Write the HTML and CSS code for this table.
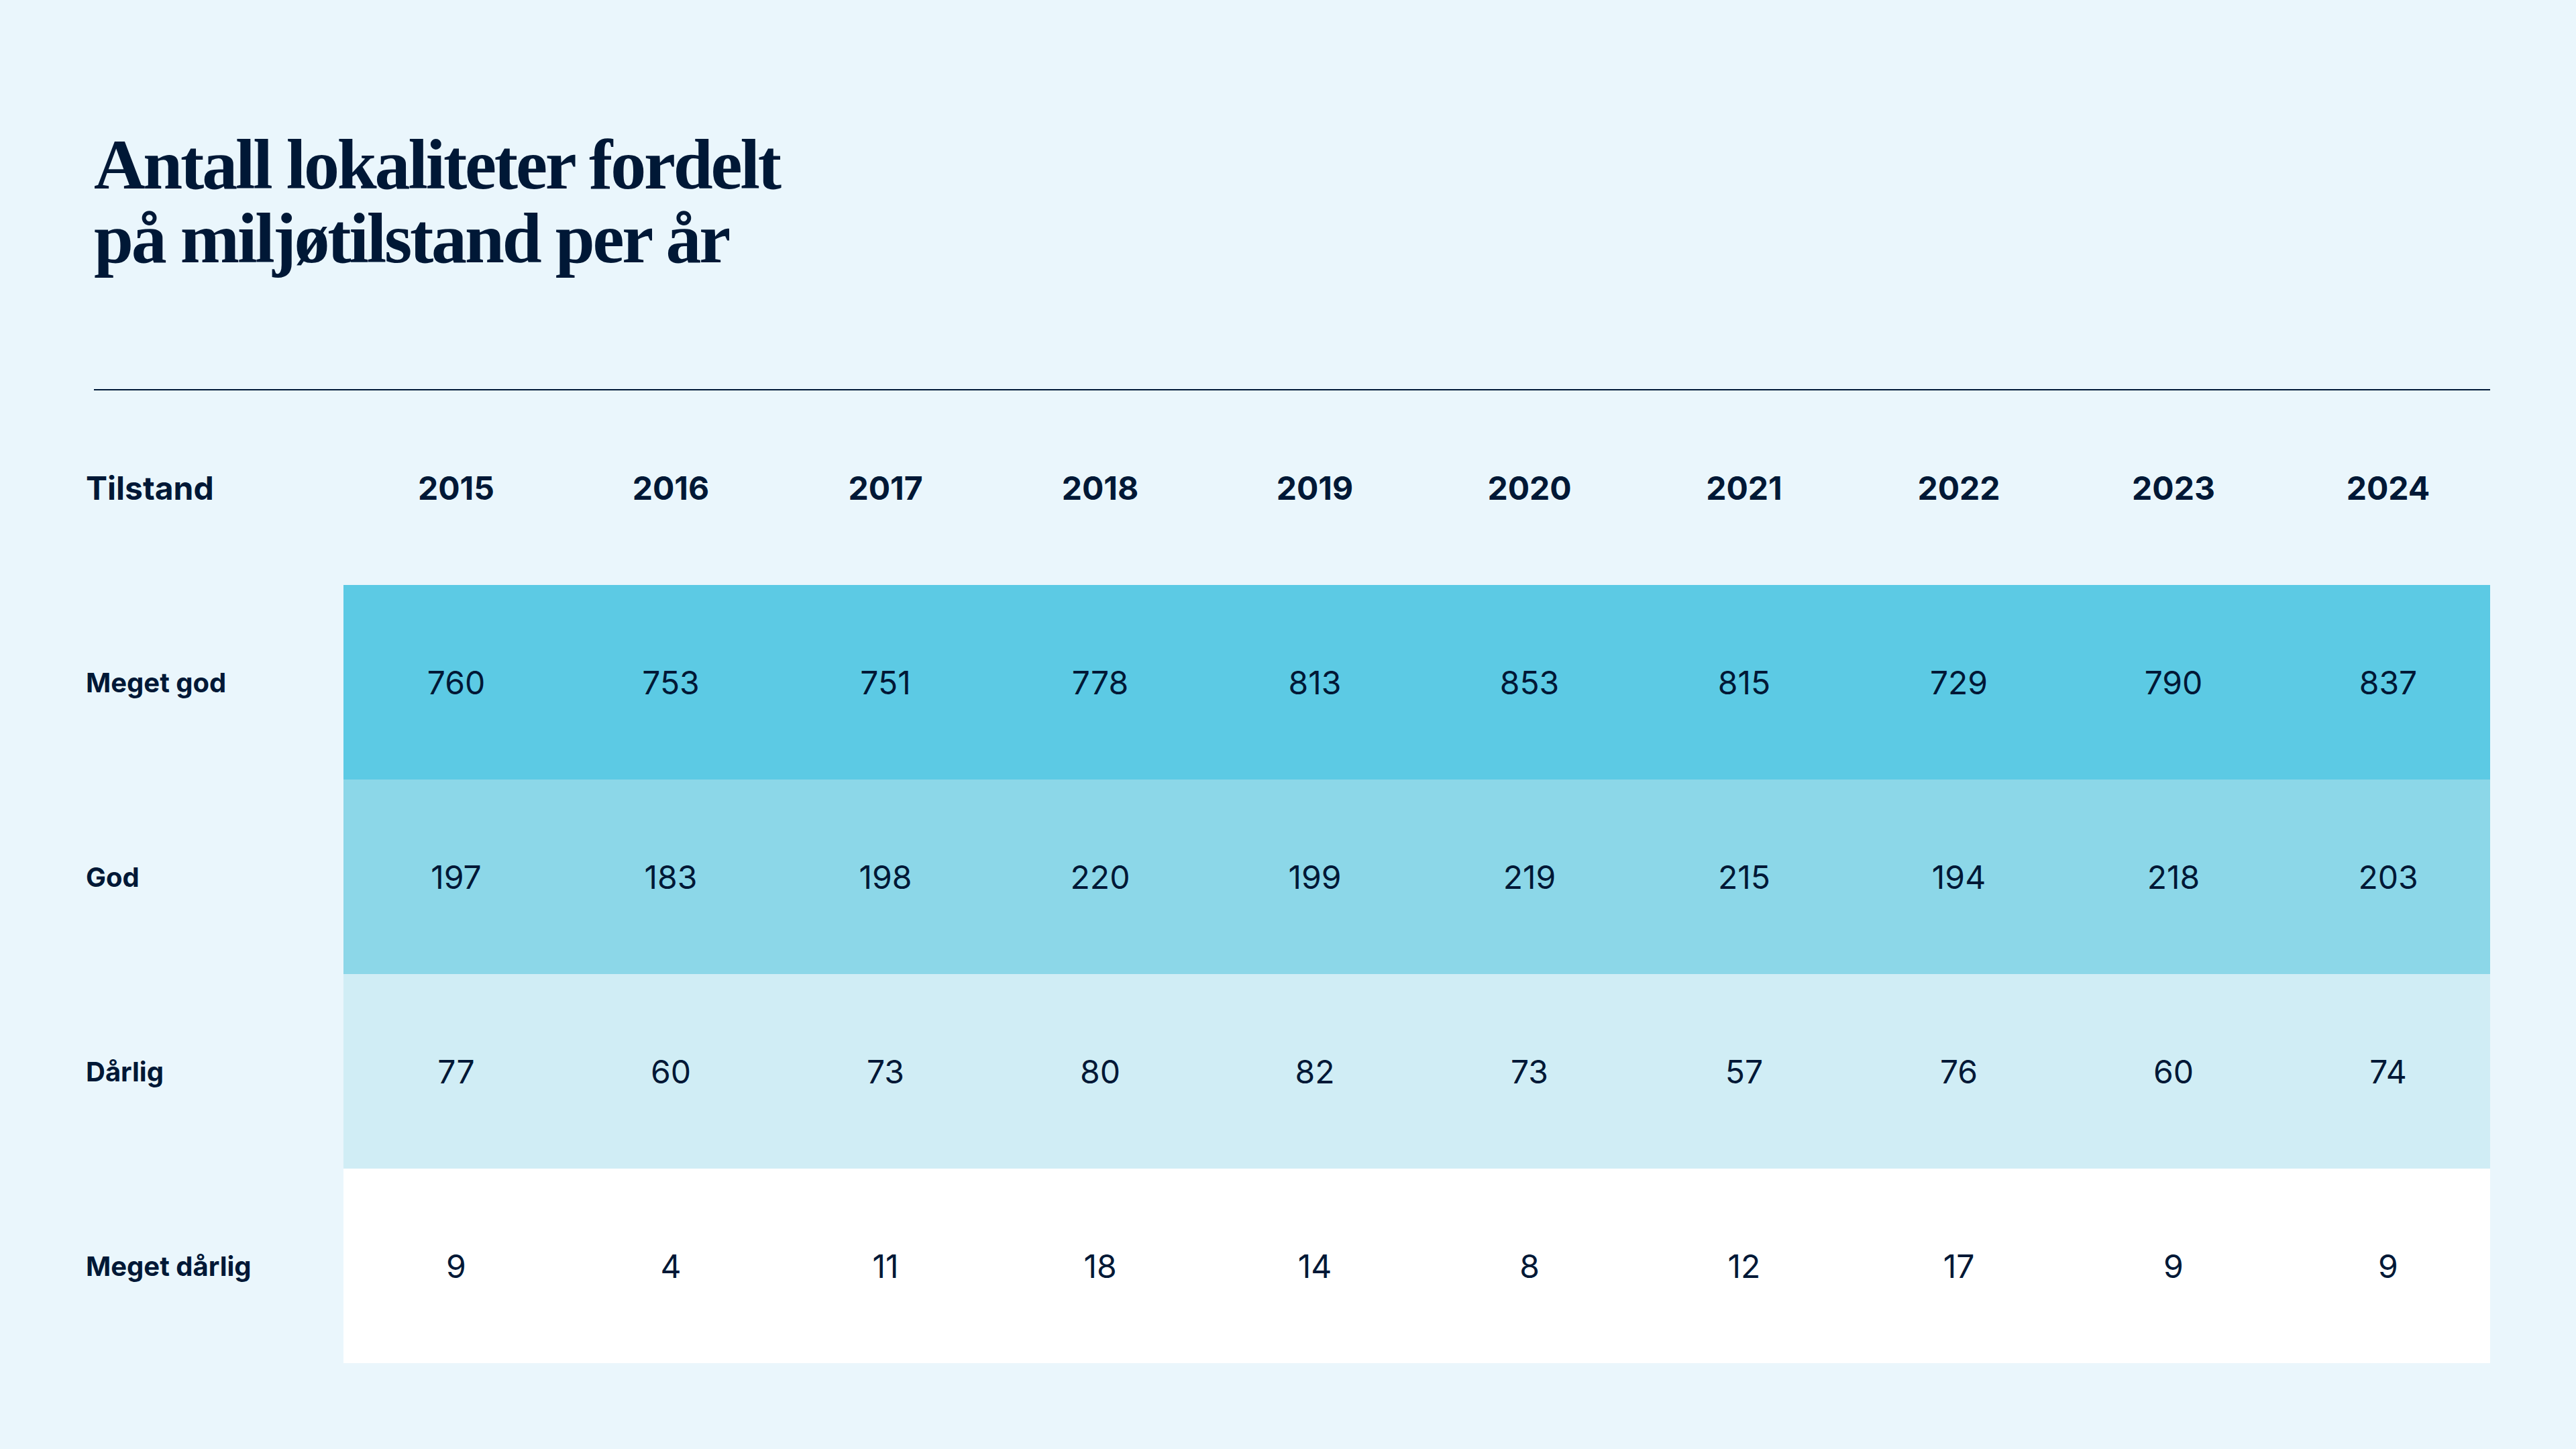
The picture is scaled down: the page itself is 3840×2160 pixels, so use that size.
FILE: index.html
```html
<!DOCTYPE html>
<html lang="no">
<head>
<meta charset="utf-8">
<title>Antall lokaliteter fordelt på miljøtilstand per år</title>
<link rel="stylesheet" href="styles.css">
</head>
<body>
<main class="page">
  <h1 class="title">Antall lokaliteter fordelt<br>på miljøtilstand per år</h1>
  <hr class="rule">
  <div class="grid">
    <div class="head label-head">Tilstand</div>
    <div class="head">2015</div><div class="head">2016</div><div class="head">2017</div><div class="head">2018</div><div class="head">2019</div>
    <div class="head">2020</div><div class="head">2021</div><div class="head">2022</div><div class="head">2023</div><div class="head">2024</div>

    <div class="label">Meget god</div>
    <div class="cell r1">760</div><div class="cell r1">753</div><div class="cell r1">751</div><div class="cell r1">778</div><div class="cell r1">813</div>
    <div class="cell r1">853</div><div class="cell r1">815</div><div class="cell r1">729</div><div class="cell r1">790</div><div class="cell r1">837</div>

    <div class="label">God</div>
    <div class="cell r2">197</div><div class="cell r2">183</div><div class="cell r2">198</div><div class="cell r2">220</div><div class="cell r2">199</div>
    <div class="cell r2">219</div><div class="cell r2">215</div><div class="cell r2">194</div><div class="cell r2">218</div><div class="cell r2">203</div>

    <div class="label">Dårlig</div>
    <div class="cell r3">77</div><div class="cell r3">60</div><div class="cell r3">73</div><div class="cell r3">80</div><div class="cell r3">82</div>
    <div class="cell r3">73</div><div class="cell r3">57</div><div class="cell r3">76</div><div class="cell r3">60</div><div class="cell r3">74</div>

    <div class="label">Meget dårlig</div>
    <div class="cell r4">9</div><div class="cell r4">4</div><div class="cell r4">11</div><div class="cell r4">18</div><div class="cell r4">14</div>
    <div class="cell r4">8</div><div class="cell r4">12</div><div class="cell r4">17</div><div class="cell r4">9</div><div class="cell r4">9</div>
  </div>
</main>
</body>
</html>
```
FILE: styles.css
```css
html, body {
  margin: 0;
  padding: 0;
  background: #eaf6fc;
}
body {
  width: 3840px;
  height: 2160px;
  color: #001836;
  font-family: Inter, "Noto Sans", sans-serif;
}
.page {
  padding: 191px 128px 0 128px;
}
.title {
  margin: 0 0 0 12px;
  font-family: "Liberation Serif", "DejaVu Serif", serif;
  font-weight: 700;
  font-size: 106px;
  line-height: 110px;
  letter-spacing: -3.2px;
  color: #001836;
}
.rule {
  margin: 169px 0 0 12px;
  border: 0;
  height: 2px;
  background: #001836;
}
.grid {
  display: grid;
  grid-template-columns: 384px repeat(10, 1fr);
  grid-auto-rows: 290px;
}
.head, .label, .cell {
  display: flex;
  align-items: center;
}
.head {
  justify-content: center;
  padding-left: 16px;
  font-size: 48px;
  font-weight: 700;
}
.label-head {
  justify-content: flex-start;
  padding-left: 0;
}
.label {
  font-size: 40px;
  font-weight: 700;
}
.cell {
  justify-content: center;
  padding-left: 16px;
  font-size: 48px;
  font-weight: 400;
}
.r1 { background: #5ccae4; }
.r2 { background: #8cd7e8; }
.r3 { background: #d0edf5; }
.r4 { background: #ffffff; }
```
